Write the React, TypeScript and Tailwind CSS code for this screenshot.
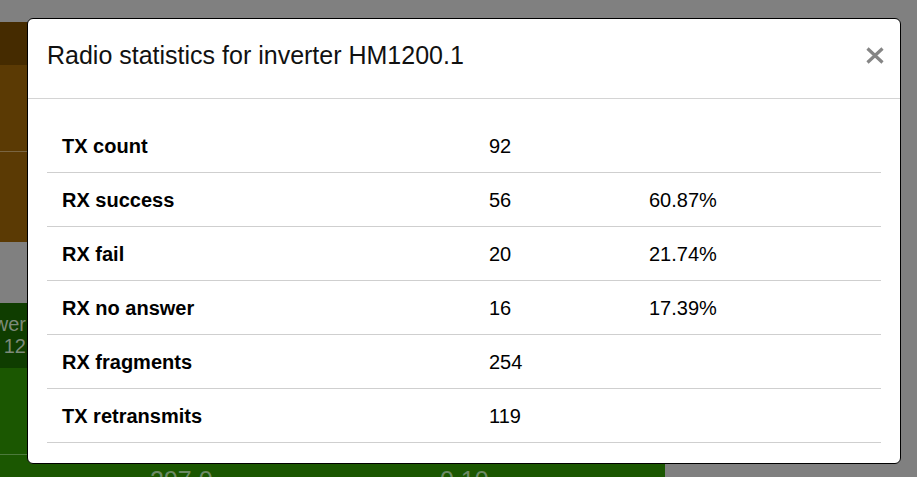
const rows = [
  { label: "TX count", value: "92", pct: "" },
  { label: "RX success", value: "56", pct: "60.87%" },
  { label: "RX fail", value: "20", pct: "21.74%" },
  { label: "RX no answer", value: "16", pct: "17.39%" },
  { label: "RX fragments", value: "254", pct: "" },
  { label: "TX retransmits", value: "119", pct: "" },
];

function Backdrop() {
  return (
    <div className="w-[665px] pt-[22px]">
      <div className="h-[43px] bg-[#452b00]" />
      <div className="h-[177px] bg-[#5b3a04] pt-[86px]">
        <div className="border-t border-[#7a6542]" />
      </div>
      <div className="h-[61px]" />
      <div className="h-[65px] bg-[#0f3d00] flex">
        <div className="w-[26px] flex justify-end overflow-hidden pt-[10px]">
          <div className="text-[20px] leading-[22px] text-[#7d8a79] text-right whitespace-nowrap">
            <div>Power</div>
            <div>12</div>
          </div>
        </div>
      </div>
      <div className="h-[109px] bg-[#1b5701] pt-[86px]">
        <div className="border-t border-[#4d7a3c] w-[40px]" />
        <div className="flex text-[25px] leading-[26px] text-[#6d8a66] pt-[12px]">
          <span className="pl-[150px] w-[440px]">297.0</span>
          <span>0.10</span>
        </div>
      </div>
    </div>
  );
}

export default function App() {
  return (
    <div
      className="relative w-[917px] h-[477px] bg-[#808080] overflow-hidden"
      style={{ fontFamily: '"Liberation Sans", Arial, sans-serif' }}
    >
      <Backdrop />
      <div className="absolute left-[27px] top-[18px] w-[874px] h-[446px] bg-white border border-black rounded-[6px] flex flex-col">
        <div className="h-[80px] border-b border-[#d4d4d4] flex items-center justify-between pl-[19px] pr-[16px] pb-[7px]">
          <h5 className="text-[25px] leading-[30px] text-[#111]">
            Radio statistics for inverter HM1200.1
          </h5>
          <svg width="18" height="17" viewBox="0 0 18 17">
            <path
              d="M1.5 1.5 L16.5 15.5 M16.5 1.5 L1.5 15.5"
              stroke="#858585"
              strokeWidth="3.2"
            />
          </svg>
        </div>
        <div className="px-[19px] pt-[20px]">
          {rows.map((r) => (
            <div
              key={r.label}
              className="grid grid-cols-[427px_160px_1fr] h-[54px] items-center border-b border-[#cfcfcf] text-[20px] text-black"
            >
              <div className="pl-[15px] font-bold">{r.label}</div>
              <div className="pl-[15px]">{r.value}</div>
              <div className="pl-[15px]">{r.pct}</div>
            </div>
          ))}
        </div>
      </div>
    </div>
  );
}
